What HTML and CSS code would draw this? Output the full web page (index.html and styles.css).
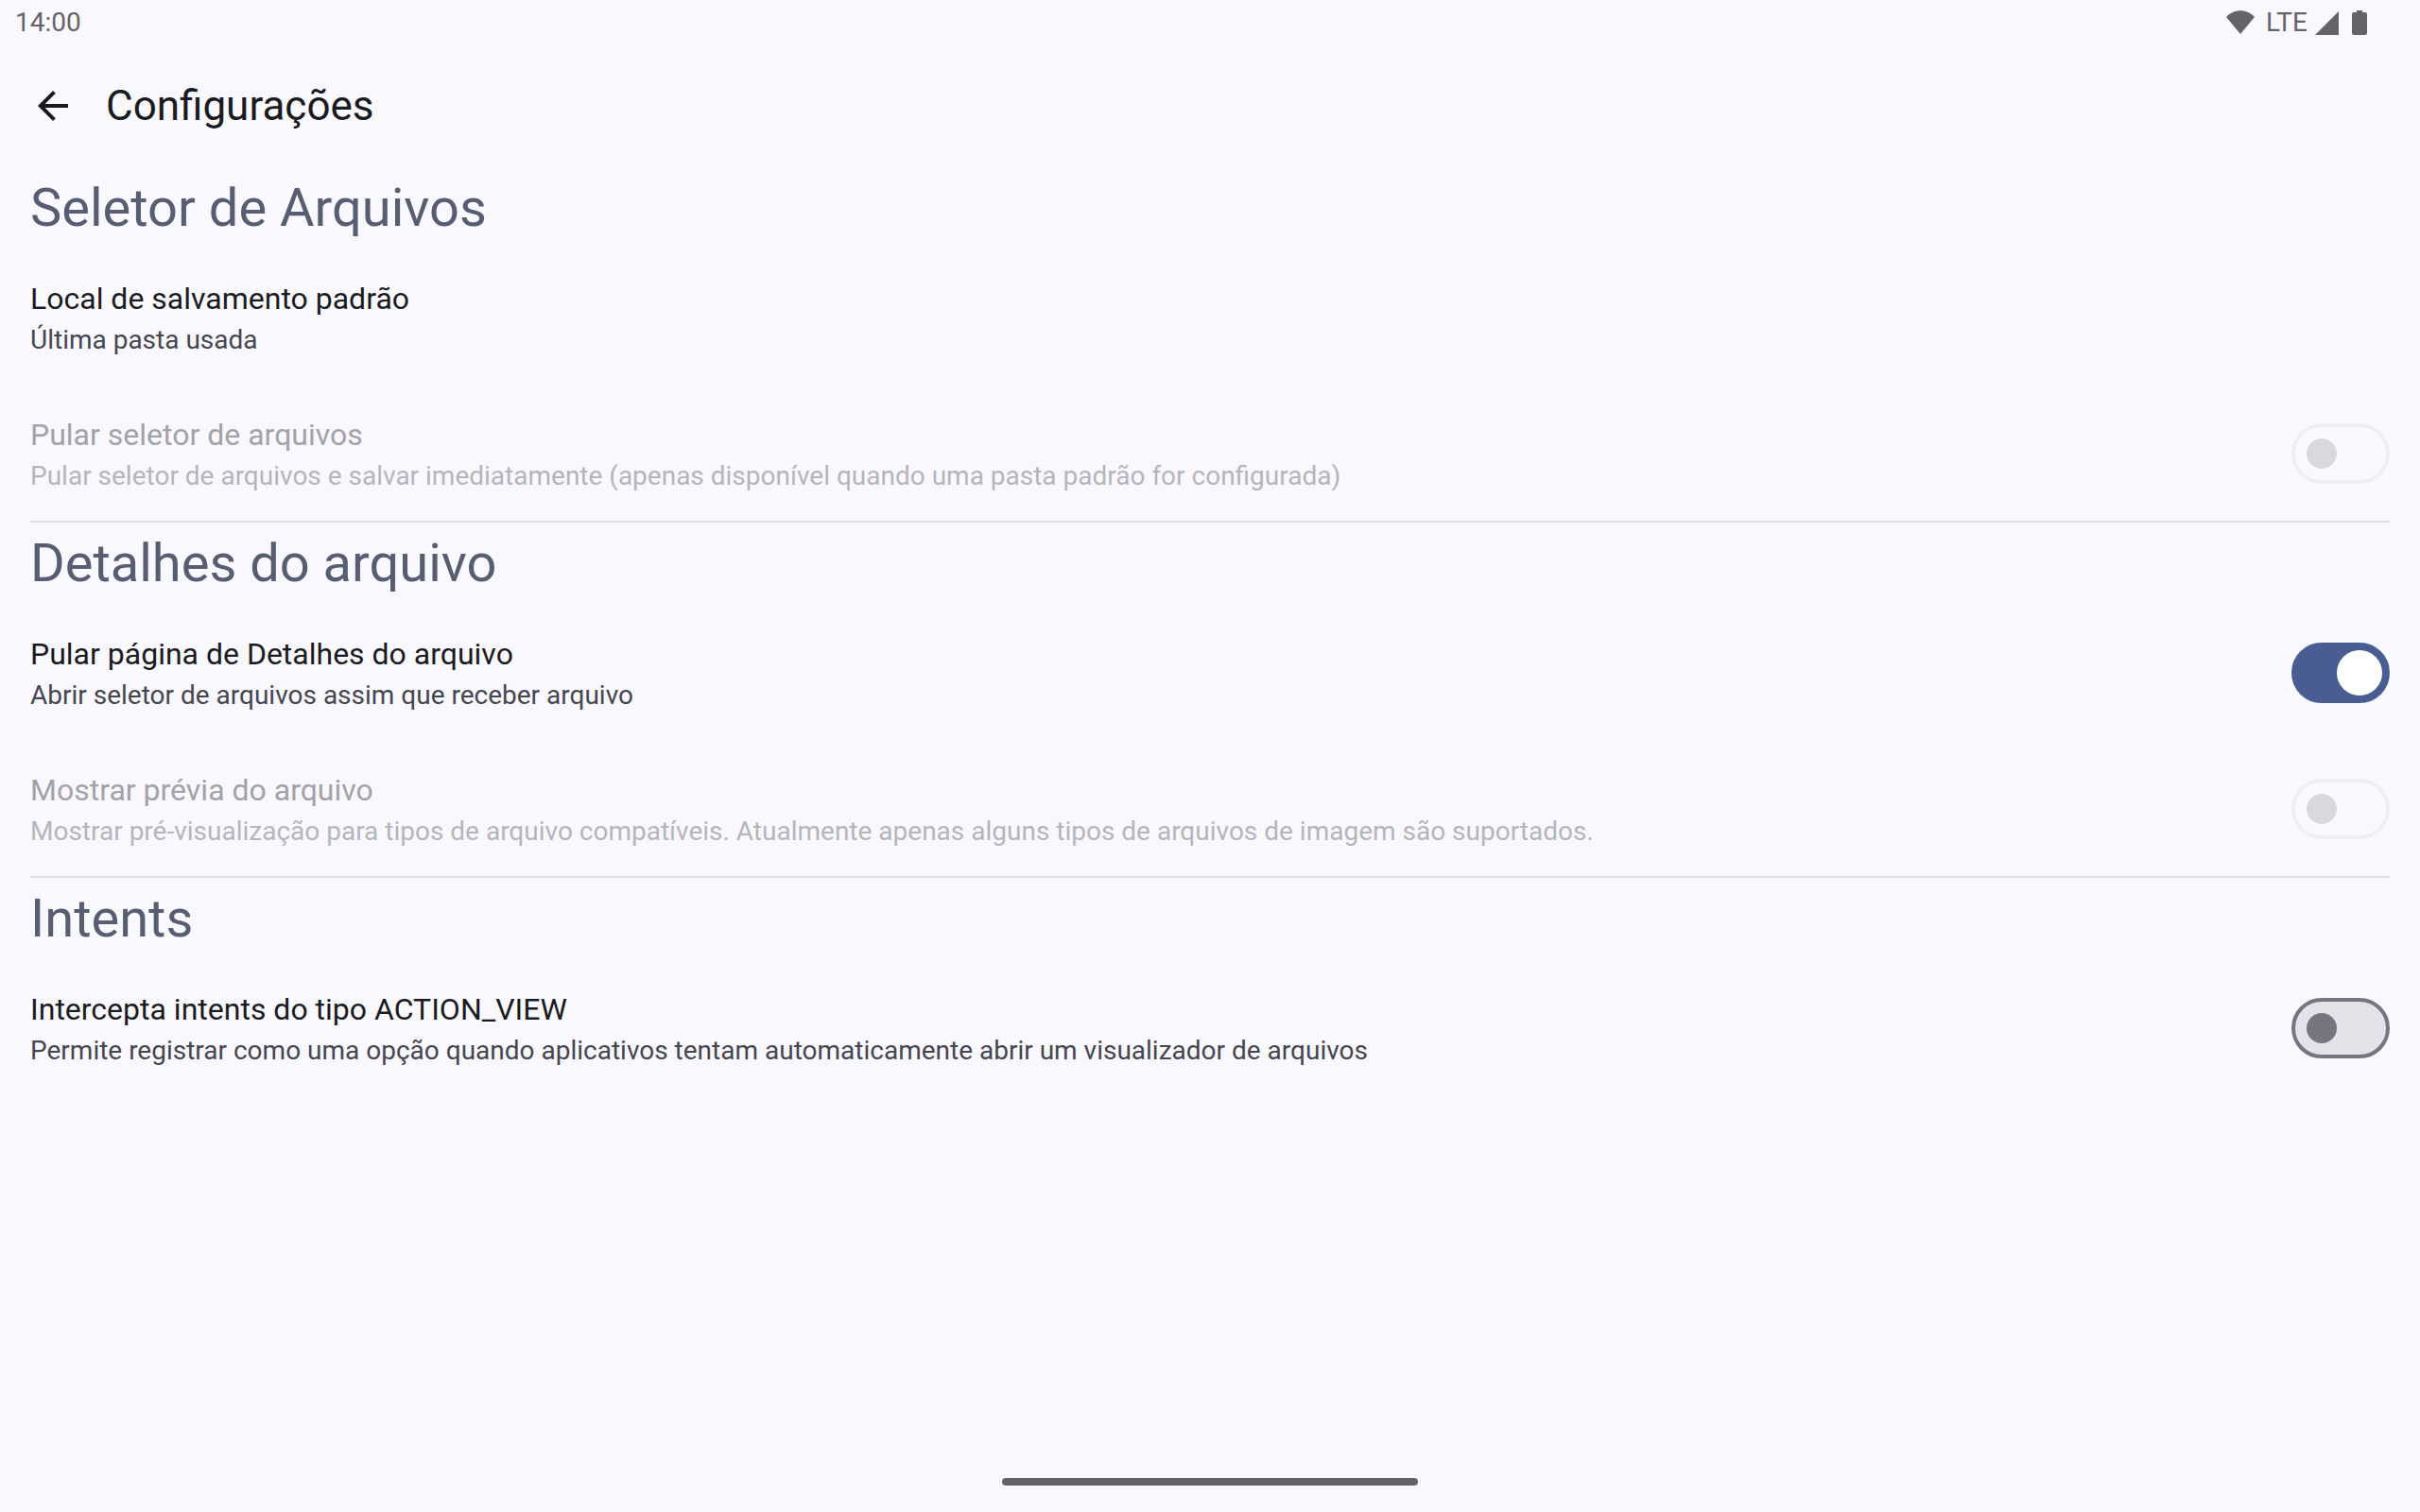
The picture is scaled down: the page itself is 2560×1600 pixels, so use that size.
FILE: index.html
```html
<!DOCTYPE html>
<html lang="pt-BR">

<head>
    <meta charset="UTF-8">
    <meta name="viewport" content="width=device-width, initial-scale=1.0">
    <title>Configurações</title>
    <link rel="stylesheet" href="styles.css">
</head>

<body>
    <div class="statusbar">
        <span class="clock">14:00</span>
        <div class="icons">
            <svg class="wifi" width="30" height="26" viewBox="0 0 30 26">
                <path d="M0 7C8 -2 22 -2 30 7L15 25Z" />
            </svg>
            <span class="network">LTE</span>
            <svg class="signal" width="25" height="25" viewBox="0 0 25 25">
                <path d="M25 0V25H0Z" />
            </svg>
            <svg class="battery" width="16" height="26" viewBox="0 0 16 26">
                <path d="M5 0H11V2H14Q16 2 16 4V24Q16 26 14 26H2Q0 26 0 24V4Q0 2 2 2H5Z" />
            </svg>
        </div>
    </div>

    <header class="appbar">
        <button class="back" type="button" aria-label="Voltar">
            <svg width="48" height="48" viewBox="0 0 24 24">
                <path d="M20 11H7.83l5.59-5.59L12 4l-8 8 8 8 1.41-1.41L7.83 13H20v-2z" />
            </svg>
        </button>
        <h1>Configurações</h1>
    </header>

    <main>
        <section class="group">
            <h2>Seletor de Arquivos</h2>
            <div class="row">
                <div class="text">
                    <p class="name">Local de salvamento padrão</p>
                    <p class="desc">Última pasta usada</p>
                </div>
            </div>
            <div class="row disabled">
                <label class="text" for="skip-picker">
                    <span class="name">Pular seletor de arquivos</span>
                    <span class="desc">Pular seletor de arquivos e salvar imediatamente (apenas disponível quando uma pasta padrão for configurada)</span>
                </label>
                <input class="switch" type="checkbox" id="skip-picker" disabled>
            </div>
        </section>

        <section class="group">
            <h2>Detalhes do arquivo</h2>
            <div class="row">
                <label class="text" for="skip-details">
                    <span class="name">Pular página de Detalhes do arquivo</span>
                    <span class="desc">Abrir seletor de arquivos assim que receber arquivo</span>
                </label>
                <input class="switch" type="checkbox" id="skip-details" checked>
            </div>
            <div class="row disabled">
                <label class="text" for="preview">
                    <span class="name">Mostrar prévia do arquivo</span>
                    <span class="desc">Mostrar pré-visualização para tipos de arquivo compatíveis. Atualmente apenas alguns tipos de arquivos de imagem são suportados.</span>
                </label>
                <input class="switch" type="checkbox" id="preview" disabled>
            </div>
        </section>

        <section class="group">
            <h2>Intents</h2>
            <div class="row">
                <label class="text" for="action-view">
                    <span class="name">Intercepta intents do tipo ACTION_VIEW</span>
                    <span class="desc">Permite registrar como uma opção quando aplicativos tentam automaticamente abrir um visualizador de arquivos</span>
                </label>
                <input class="switch" type="checkbox" id="action-view">
            </div>
        </section>
    </main>

    <div class="navbar">
        <div class="handle"></div>
    </div>
</body>

</html>
```

FILE: styles.css
```css
* {
    margin: 0;
    padding: 0;
    box-sizing: border-box;
}

body {
    display: flex;
    flex-direction: column;
    min-height: 100vh;
    background-color: #faf8ff;
    color: #1a1b21;
    font-family: Roboto, "Liberation Sans", sans-serif;
}

/* status bar */
.statusbar {
    display: flex;
    justify-content: space-between;
    align-items: center;
    height: 48px;
    padding: 0 56px 0 16px;
    color: #646466;
    font-size: 28px;
    line-height: 48px;
}

.icons {
    display: flex;
    align-items: center;
}

.icons svg {
    fill: #646466;
}

.network {
    margin: 0 8px 0 12px;
}

.battery {
    margin-left: 14px;
}

/* app bar */
.appbar {
    display: flex;
    align-items: center;
    height: 128px;
    padding: 0 8px;
}

.back {
    display: flex;
    justify-content: center;
    align-items: center;
    width: 96px;
    height: 96px;
    border: none;
    background: none;
}

.back svg {
    fill: #1a1b21;
}

.appbar h1 {
    margin-left: 8px;
    font-size: 44px;
    line-height: 56px;
    font-weight: 400;
}

/* settings */
main {
    flex: 1;
    padding: 0 32px;
}

.group h2 {
    padding: 8px 0;
    color: #585e71;
    font-size: 56px;
    line-height: 72px;
    font-weight: 400;
}

/* divider sits over the edge between two groups */
.group+.group {
    border-top: 2px solid #e1e1e8;
    margin-top: -1px;
}

.group+.group h2 {
    padding-top: 7px;
}

.row {
    display: flex;
    justify-content: space-between;
    align-items: center;
    min-height: 144px;
}

.name,
.desc {
    display: block;
}

.name {
    font-size: 32px;
    line-height: 48px;
}

.desc {
    color: #45464f;
    font-size: 28px;
    line-height: 40px;
}

.disabled .name {
    color: #a3a2a9;
}

.disabled .desc {
    color: #b6b5bc;
}

/* switch */
.switch {
    appearance: none;
    display: flex;
    align-items: center;
    flex-shrink: 0;
    width: 104px;
    height: 64px;
    padding: 0 12px;
    border: 4px solid #757680;
    border-radius: 32px;
    background-color: #e3e2e9;
}

.switch::before {
    content: "";
    width: 32px;
    height: 32px;
    border-radius: 50%;
    background-color: #757680;
}

.switch:checked {
    justify-content: flex-end;
    padding: 0 4px;
    border-color: #495d92;
    background-color: #495d92;
}

.switch:checked::before {
    width: 48px;
    height: 48px;
    background-color: #fff;
}

.switch:disabled {
    border-color: #efeef4;
    background-color: #faf8ff;
}

.switch:disabled::before {
    background-color: #d9d8df;
}

/* gesture bar */
.navbar {
    display: flex;
    justify-content: center;
    padding: 20px 0 28px;
}

.handle {
    width: 440px;
    height: 8px;
    border-radius: 4px;
    background-color: #646466;
}
```
